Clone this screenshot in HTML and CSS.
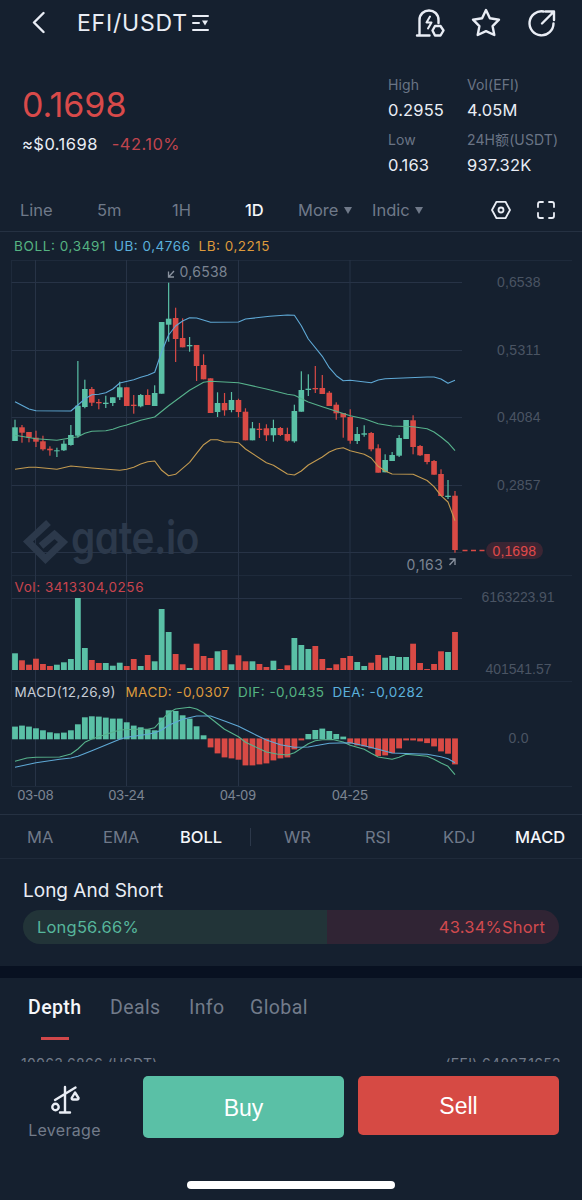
FILE: index.html
```html
<!DOCTYPE html>
<html lang="en">
<head>
  <meta charset="UTF-8">
  <title>EFI/USDT</title>
  <link rel="stylesheet" href="styles.css">
</head>
<body>
  <header class="topbar">
    <svg class="back" width="14" height="24" viewBox="0 0 14 24"><path d="M12.500 2 L3 11.500 L12.500 21" /></svg>
    <h1 class="pair">EFI/USDT</h1>
    <svg class="pair-menu" width="18" height="18" viewBox="0 0 18 18">
      <path d="M1 2H16M1 9H7M1 16H16" />
      <path class="solid" d="M10 6.500H16L13 11.500Z" />
    </svg>
    <div class="actions">
      <svg width="30" height="30" viewBox="0 0 30 30">
        <path d="M2 27.500H14.500M4.500 27V12C4.500 6 9 2.500 14 2.500S23.500 6 23.500 12V15" />
        <path class="thin" d="M15 8.500L11.500 14.500H16.500L13 20.500" />
        <path d="M20 18H25.500L28.500 22.500L25.500 27.500H20L17.500 22.500Z" />
      </svg>
      <svg width="30" height="30" viewBox="0 0 30 30">
        <path d="M15 2L18.900 10.300L28 11.700L21.600 18.200L23.300 27L15 23.200L6.700 27L8.400 18.200L2 11.700L11.100 10.300Z" />
      </svg>
      <svg width="30" height="30" viewBox="0 0 30 30">
        <path d="M16.500 3.500A12 12 0 1 0 26.500 15.500M15 15.500L26.500 4M18.500 3.500H27V12" />
      </svg>
    </div>
  </header>

  <section class="ticker">
    <div class="last">
      <div class="price">0.1698</div>
      <div class="sub"><span class="usd">≈$0.1698</span><span class="change">-42.10%</span></div>
    </div>
    <dl class="stats">
      <div><dt>High</dt><dd>0.2955</dd></div>
      <div><dt>Vol(EFI)</dt><dd>4.05M</dd></div>
      <div><dt>Low</dt><dd>0.163</dd></div>
      <div><dt class="turnover">24H额(USDT)</dt><dd>937.32K</dd></div>
    </dl>
  </section>

  <nav class="periods">
    <span class="p-line">Line</span>
    <span class="p-5m">5m</span>
    <span class="p-1h">1H</span>
    <span class="p-1d active">1D</span>
    <span class="p-more">More <i class="caret"></i></span>
    <span class="p-indic">Indic <i class="caret"></i></span>
    <svg class="settings" width="22" height="20" viewBox="0 0 22 20">
      <path d="M6.500 1.800H15.500L20 10L15.500 18.200H6.500L2 10Z" />
      <circle cx="11" cy="10" r="2.500" />
    </svg>
    <svg class="expand" width="18" height="18" viewBox="0 0 18 18">
      <path d="M1 6V3Q1 1 3 1H6M12 1H15Q17 1 17 3V6M17 12V15Q17 17 15 17H12M6 17H3Q1 17 1 15V12" />
    </svg>
  </nav>

  <svg class="chart" width="582" height="582" viewBox="0 232 582 582">
    <g class="grid faint">
      <path d="M11.500 260.500H572M11.500 575.500H572M11.500 681.500H572M11.500 786.500H572M11.500 260V786" />
    </g>
    <g class="grid">
      <path d="M11.500 282.500H462M11.500 350.500H462M11.500 417.500H462M11.500 485.500H462M11.500 552.500H462M11.500 598.500H462" />
      <path d="M35.500 260V786M126.500 260V786M238.500 260V786M350 260V786" />
    </g>

    <g class="watermark">
      <path class="mark" d="M48.500 522.500L28 541.500L45.500 559L63 542L54.500 534.500L41 546" />
      <text x="71" y="554" textLength="128" lengthAdjust="spacingAndGlyphs">gate.io</text>
    </g>

    <g id="candles"></g>
    <g id="volume"></g>
    <g id="macd"></g>
    <g id="lines" class="lines"></g>

    <g class="legend">
      <text class="mid" x="14" y="251" textLength="91.500">BOLL: 0,3491</text>
      <text class="ub" x="114" y="251" textLength="76">UB: 0,4766</text>
      <text class="lb" x="198.500" y="251" textLength="71">LB: 0,2215</text>
      <text class="vol" x="14.500" y="592" textLength="129">Vol: 3413304,0256</text>
      <text class="name" x="14.500" y="697" textLength="101">MACD(12,26,9)</text>
      <text class="lb" x="125.500" y="697" textLength="104">MACD: -0,0307</text>
      <text class="mid" x="238" y="697" textLength="86">DIF: -0,0435</text>
      <text class="ub" x="332.500" y="697" textLength="91">DEA: -0,0282</text>
    </g>

    <g class="mark-label">
      <text x="179.500" y="277" textLength="48">0,6538</text>
      <path d="M174 271L168.500 277M168.500 271.500V277H174" />
      <text x="406.500" y="569.500" textLength="36.500">0,163</text>
      <path d="M449.500 565L455 559M449.500 559H455V565" />
    </g>

    <g class="scale">
      <text x="497" y="287" textLength="43.500">0,6538</text>
      <text x="497" y="354.500" textLength="43.500">0,5311</text>
      <text x="497" y="422" textLength="43.500">0,4084</text>
      <text x="497" y="489.500" textLength="43.500">0,2857</text>
      <text x="481.500" y="602" textLength="73">6163223.91</text>
      <text x="485.500" y="673.500" textLength="66">401541.57</text>
      <text x="508.500" y="743" textLength="20">0.0</text>
    </g>

    <path class="last-line" d="M462.500 550.500H485" />
    <rect class="last-pill" x="486" y="542" width="57" height="17" rx="8.500" />
    <text class="last-text" x="492.500" y="556" textLength="43.500">0,1698</text>

    <g class="dates">
      <text x="17.500" y="800" textLength="36">03-08</text>
      <text x="108.500" y="800" textLength="36">03-24</text>
      <text x="220" y="800" textLength="36">04-09</text>
      <text x="332" y="800" textLength="36">04-25</text>
    </g>
  </svg>

  <nav class="indicators">
    <span class="i-ma">MA</span>
    <span class="i-ema">EMA</span>
    <span class="i-boll active">BOLL</span>
    <i class="split"></i>
    <span class="i-wr">WR</span>
    <span class="i-rsi">RSI</span>
    <span class="i-kdj">KDJ</span>
    <span class="i-macd active">MACD</span>
  </nav>

  <section class="ratio">
    <h2>Long And Short</h2>
    <div class="ratio-bar">
      <div class="long" style="width: 56.66%">Long56.66%</div>
      <div class="short">43.34%Short</div>
    </div>
  </section>

  <nav class="tabs">
    <span class="t-depth active">Depth</span>
    <span class="t-deals">Deals</span>
    <span class="t-info">Info</span>
    <span class="t-global">Global</span>
  </nav>

  <div class="depth-totals">
    <span class="bid-total">10963.6866 (USDT)</span>
    <span class="ask-total">(EFI) 64887.1652</span>
  </div>

  <footer class="trade">
    <div class="leverage">
      <svg width="30" height="30" viewBox="0 0 30 30">
        <path d="M15 2V27M10 27.500H20M5 15L25.500 2.500" />
        <circle cx="5.500" cy="22" r="3.200" />
        <path d="M25 7.500L21.700 13Q21.700 14.500 23 14.500H27Q28.500 14.500 28.500 13Z" />
      </svg>
      <span>Leverage</span>
    </div>
    <button type="button" class="buy">Buy</button>
    <button type="button" class="sell">Sell</button>
  </footer>
  <div class="home-bar"></div>

  <script src="chart.js"></script>
</body>
</html>
```

FILE: styles.css
```css
* {
  box-sizing: border-box;
}

body {
  margin: 0;
  width: 582px;
  height: 1200px;
  overflow: hidden;
  background-color: #15202f;
  color: #e9edf5;
  font-family: Inter, "Liberation Sans", sans-serif;
}

svg {
  display: block;
}

/* top bar */
.topbar {
  display: flex;
  align-items: center;
  height: 46px;
  padding: 0 25px 0 31px;
}

.topbar svg,
.leverage svg,
.settings,
.expand {
  fill: none;
  stroke: #e9edf5;
  stroke-width: 2.4;
  stroke-linecap: round;
  stroke-linejoin: round;
}

.pair {
  margin: 0 0 0 32px;
  width: 115px;
  font-size: 23px;
  font-weight: 400;
  letter-spacing: 0.8px;
  white-space: nowrap;
}

.topbar .pair-menu {
  stroke-width: 2;
}

.topbar .solid {
  fill: #e9edf5;
  stroke: none;
}

.topbar .thin {
  stroke-width: 2;
}

.actions {
  display: flex;
  gap: 26px;
  margin-left: auto;
}

/* ticker */
.ticker {
  display: flex;
  height: 144px;
}

.last {
  width: 388px;
  padding: 38px 0 0 22px;
}

.price {
  color: #d94a4a;
  font-size: 34px;
  line-height: 42px;
}

.sub {
  display: flex;
  gap: 14px;
  margin-top: 6px;
  font-size: 16.500px;
  line-height: 24px;
  letter-spacing: 0.45px;
}

.change {
  color: #c0454e;
}

.stats {
  display: grid;
  grid-template-columns: 79px 110px;
  grid-auto-rows: 55px;
  margin: 29px 0 0;
}

.stats dt {
  color: #6a7485;
  font-size: 14px;
  line-height: 20px;
  letter-spacing: 0.1px;
  white-space: nowrap;
}

.turnover {
  font-family: Inter, "Noto Sans CJK SC", sans-serif;
}

.stats dd {
  margin: 3px 0 0;
  font-size: 16.500px;
  line-height: 24px;
  letter-spacing: 0.15px;
}

/* chart periods */
.periods {
  display: flex;
  align-items: center;
  height: 42px;
  padding: 0 0 2px 20px;
  border-bottom: 1px solid #253142;
  color: #6f7989;
  font-size: 16.500px;
  white-space: nowrap;
}

.p-line { width: 77px; }
.p-5m { width: 75px; }
.p-1h { width: 73px; }
.p-1d { width: 53px; }
.p-more { width: 74px; }
.p-indic { width: 118px; }

.periods .active,
.indicators .active,
.tabs .active {
  color: #f4f6fa;
  font-weight: 500;
}

.caret {
  display: inline-block;
  margin-left: 1px;
  border: 4.500px solid transparent;
  border-top: 7px solid #6f7989;
  border-bottom: 0;
  vertical-align: 2px;
}

.settings,
.expand {
  stroke-width: 1.800;
}

.expand {
  margin-left: 25px;
}

/* chart */
.grid path {
  stroke: #273346;
  fill: none;
}

.faint path {
  stroke: #1e2a3b;
}

.watermark text {
  fill: #2c394b;
  font-size: 46px;
  font-weight: 600;
  letter-spacing: -0.5px;
  font-feature-settings: "cv11";
}

.watermark .mark {
  fill: none;
  stroke: #2c394b;
  stroke-width: 7;
}

.up {
  fill: #5ac0a6;
}

.down {
  fill: #d94a45;
}

.lines path {
  fill: none;
  stroke-width: 1.100;
  stroke-linejoin: round;
}

.line-ub { stroke: #5fa9d6; }
.line-mid { stroke: #57b28c; }
.line-lb { stroke: #c39a50; }

.legend text {
  font-size: 13.500px;
}

.legend .mid { fill: #55b382; }
.legend .ub { fill: #5bb0dc; }
.legend .lb { fill: #dd9a3c; }
.legend .vol { fill: #c8444e; }
.legend .name { fill: #c6ccd6; }

.mark-label text {
  fill: #7b8492;
  font-size: 14px;
}

.mark-label path {
  fill: none;
  stroke: #8a929f;
  stroke-width: 1.300;
}

.scale text {
  fill: #4a5463;
  font-family: "Liberation Sans", sans-serif;
  font-size: 14px;
}

.last-line {
  stroke: #d94a45;
  stroke-width: 1.300;
  stroke-dasharray: 5 3.500;
}

.last-pill {
  fill: #3b2533;
}

.last-text {
  fill: #e04a4a;
  font-family: "Liberation Sans", sans-serif;
  font-size: 14px;
}

.dates text {
  fill: #7b8492;
  font-family: "Liberation Sans", sans-serif;
  font-size: 14px;
}

/* indicator switcher */
.indicators {
  display: flex;
  align-items: center;
  height: 45px;
  padding-left: 27px;
  border-top: 1px solid #253142;
  border-bottom: 1px solid #1f2a3a;
  color: #6f7989;
  font-size: 16.500px;
}

.i-ma { width: 76px; }
.i-ema { width: 77px; }
.i-boll { width: 70px; }
.i-wr { width: 81px; }
.i-rsi { width: 78px; }
.i-kdj { width: 72px; }

.split {
  width: 1px;
  height: 18px;
  margin-right: 33px;
  background-color: #2c384a;
}

/* long / short */
.ratio {
  height: 119px;
  padding: 20px 23px 0;
  border-bottom: 12px solid #081121;
}

.ratio h2 {
  margin: 0;
  font-size: 19px;
  font-weight: 400;
  line-height: 24px;
}

.ratio-bar {
  display: flex;
  height: 34px;
  margin-top: 7px;
  border-radius: 17px;
  overflow: hidden;
  font-size: 16.500px;
  line-height: 34px;
  letter-spacing: 0.2px;
}

.long {
  padding-left: 14px;
  background-color: #223438;
  color: #56b69c;
}

.short {
  flex: 1;
  padding-right: 14px;
  background-color: #302434;
  color: #d04a4e;
  text-align: right;
}

/* order tabs */
.tabs {
  display: flex;
  height: 77px;
  padding: 17px 0 0 28px;
  color: #727b8a;
  font-family: Roboto, sans-serif;
  font-size: 19.500px;
  line-height: 25px;
  letter-spacing: 0.4px;
}

.t-depth { width: 82px; }
.t-deals { width: 79px; }
.t-info { width: 61px; }

.t-depth::after {
  content: "";
  display: block;
  width: 28px;
  height: 3px;
  margin: 17px 0 0 13px;
  background-color: #d0474a;
}

/* only the top of this row shows above the trade bar */
.depth-totals {
  display: flex;
  justify-content: space-between;
  height: 7px;
  padding: 0 21px;
  overflow: hidden;
  color: #727b8a;
  font-size: 14px;
  line-height: 18px;
  letter-spacing: 0.35px;
}

/* trade bar */
.trade {
  display: flex;
  align-items: flex-start;
  height: 121px;
  padding: 14px 0 0 23px;
}

.leverage {
  display: flex;
  flex-direction: column;
  align-items: center;
  width: 83px;
  margin: 9px 37px 0 0;
  color: #727b8a;
  font-size: 16px;
  line-height: 20px;
  letter-spacing: 0.3px;
}

.leverage span {
  margin-top: 5px;
}

.trade button {
  width: 201px;
  padding: 2px 0 0;
  border: none;
  border-radius: 5px;
  color: #fff;
  font-family: "Liberation Sans", sans-serif;
  font-size: 23px;
}

.buy {
  height: 62px;
  background-color: #5ac0a6;
}

.sell {
  height: 59px;
  margin-left: 14px;
  background-color: #d64a44;
}

.home-bar {
  width: 208px;
  height: 8px;
  margin: -2px auto 0;
  border-radius: 4px;
  background-color: #fff;
}
```

FILE: chart.js
```js
const SVG = "http://www.w3.org/2000/svg";
const STEP = 6.984;
const X0 = 15;

// colour, high, body top, body bottom, low
const candles = [
  ["up", 419.7, 427.3, 441, 441], ["down", 425, 427.3, 432.7, 442.7],
  ["down", 432, 432, 437.7, 442.3], ["down", 430.7, 437.7, 441.7, 447],
  ["down", 435.7, 441.3, 449.3, 450.7], ["down", 446.3, 448.7, 450.3, 455.7],
  ["up", 447.7, 450.3, 451.3, 457], ["up", 440.3, 443.7, 450.3, 451],
  ["up", 425, 435, 445, 445.7], ["up", 361, 405.7, 435.7, 437.7],
  ["up", 379.7, 389, 407, 408.3], ["down", 387, 389, 402.7, 406],
  ["down", 399, 402, 403.3, 409.3], ["up", 395.7, 402.7, 404, 408],
  ["up", 397.3, 397.3, 403, 406], ["up", 381.7, 387.3, 397.3, 400],
  ["down", 387.3, 387.3, 406, 406], ["down", 395, 404.7, 406, 413.7],
  ["up", 394, 395, 406.3, 407.3], ["down", 389.3, 395, 405, 405],
  ["up", 385.3, 393, 406, 406], ["up", 322, 322, 393.7, 393.7],
  ["up", 282.7, 318.7, 324.7, 341.7], ["down", 307.7, 318, 339, 362],
  ["down", 318.3, 338, 347.3, 347.3], ["up", 337, 345, 346.3, 351.7],
  ["down", 345, 345, 366, 381], ["down", 354.3, 365, 379.3, 379.3],
  ["down", 378.3, 378.3, 413, 413], ["up", 392.3, 403, 412, 417],
  ["down", 393, 403, 410.3, 415.7], ["up", 392, 400, 410, 412.3],
  ["down", 398.7, 400, 412, 417.3], ["down", 408.3, 411.7, 440.3, 440.3],
  ["up", 422, 428.3, 440.3, 440.3], ["down", 423, 428.7, 430, 438],
  ["down", 424.3, 428.3, 435.3, 441], ["up", 419.7, 428, 435.3, 441.7],
  ["down", 427, 428, 435, 436], ["down", 427.7, 434, 440.7, 441.7],
  ["up", 404.7, 411, 441.3, 442.7], ["up", 371.3, 390, 411.7, 411.7],
  ["up", 374.3, 388.7, 390, 396], ["down", 366, 388, 389.3, 393],
  ["down", 375, 388, 394, 394], ["down", 391, 392.7, 406, 406],
  ["down", 402.3, 404.7, 413.3, 419.7], ["down", 413, 413, 417.3, 437.7],
  ["down", 409.3, 417, 440.7, 443.7], ["up", 427, 434, 441, 444],
  ["up", 425.3, 433.3, 434.7, 436.7], ["down", 432, 433, 449.3, 451.3],
  ["down", 444.3, 448.3, 472.7, 472.7], ["up", 454.3, 460, 472.3, 472.3],
  ["up", 452, 455, 461, 461], ["up", 435, 438, 455.7, 457],
  ["up", 420, 420, 439, 439], ["down", 415.3, 420.3, 447, 454.3],
  ["down", 445, 446, 455.3, 456], ["down", 454, 454, 462, 464.3],
  ["down", 460, 461, 474.7, 474.7], ["down", 469.3, 474, 496, 496],
  ["up", 480, 495.7, 497, 499], ["down", 491, 495.7, 550, 552.7]
];

const volume = [
  16.7, 9.7, 5.3, 11.3, 6, 4, 5.3, 7.7, 11, 72, 22, 10, 7, 7, 4.3, 7.3,
  4, 11, 4, 15, 8.7, 61, 38, 16, 5.7, 2, 26.3, 14, 12, 18.7, 20, 5.7,
  14.7, 8.7, 8.7, 6, 3, 9.3, 1, 4.7, 32, 25, 21, 24, 11, 2, 5.7, 12,
  14, 8, 4, 7.3, 15, 12.3, 14, 13, 13, 26.3, 7, 1, 6, 18.7, 18, 38
];

const macd = [
  12.7, 13.7, 12.7, 11, 9, 7, 6, 6.7, 9, 15, 22, 23, 22.7, 21.7, 20.7, 20.7,
  17, 13.7, 12, 10, 9, 21.7, 29, 28.3, 24, 20.7, 13, 4, -9, -15, -19, -20,
  -21.3, -27, -27, -26, -25, -22, -20, -19, -11, -2, 5.3, 9.3, 10.7, 8.3, 5.3, 2.7,
  -5, -7, -8, -10, -17.7, -17, -14.7, -10, -2, -2, -3, -4.7, -8, -13, -15.3, -26
];

// candle index, y
const lines = {
  ub: [[0, 401.7], [2, 409], [3, 410.7], [8, 411], [9, 405], [10, 399], [11, 394.7], [12, 394.3], [13, 392.7],
    [14, 389], [15, 383], [17, 379.7], [18, 377.3], [19, 375.3], [20, 372.3], [21, 351.7], [22, 335], [23, 326],
    [24, 321], [25, 317.7], [26, 318], [28, 322.3], [32, 322], [33, 319], [36.5, 316.3], [39, 315], [40, 315.3],
    [41, 325.7], [42, 339], [44, 356.3], [45, 367.7], [46, 375.7], [47, 380.7], [48, 380.3], [51, 382.7],
    [52, 380], [53, 378.7], [59, 377], [60, 377], [61, 379], [62, 383.3], [63, 380.3]],
  mid: [[0, 435.3], [3, 438.7], [6, 440.3], [9, 436.7], [10, 433.3], [11, 431.3], [13, 430.7], [14, 429.3],
    [15, 426.7], [16, 425], [18, 420.3], [20, 417], [22, 405.7], [25, 390.3], [27, 382.3], [28, 381.3],
    [30, 382], [32, 382.7], [36, 389], [39, 394.3], [40, 395.3], [42, 402], [44, 406.7], [46, 411.3],
    [48, 415.7], [50, 418.7], [52, 423.7], [54, 426], [57, 426.7], [59, 428.7], [60, 432], [61, 437],
    [62, 442.7], [63, 450.7]],
  lb: [[0, 469.3], [2, 467.3], [3, 467.3], [6, 469.3], [8, 466], [11, 468], [15, 470.3], [16, 469.3],
    [17, 467.3], [18, 464], [19, 461.7], [20, 461], [21, 470.3], [22, 475.7], [23, 474.3], [25, 462.3],
    [26, 453.3], [27, 444.7], [28, 439.7], [29, 439.7], [30, 442], [31, 442], [32, 442.7], [33, 449],
    [36, 462.7], [37, 465.3], [39, 474], [40, 475], [41, 471], [42, 465], [44, 457], [45, 452], [46, 449],
    [47, 447.7], [48, 450.7], [50, 454.3], [51, 458], [52, 466.3], [53, 471], [54, 474], [57, 474.3],
    [59, 480.5], [60, 486.7], [61, 495.7], [62, 502], [63, 520.7]],
  dif: [[0, 761.3], [1.7, 758], [3, 757.3], [6.4, 757], [8, 754], [9, 749], [10, 742.3], [11, 739],
    [13.5, 733.3], [15, 730], [17, 729.3], [19, 729.3], [20, 727.7], [21, 720], [22, 712.7], [23, 709],
    [25, 707.3], [26, 709], [27, 712.7], [28, 718.3], [30, 729.3], [32, 736.7], [33, 742.3], [36, 752],
    [37.5, 754], [39, 755], [40, 752.7], [41, 748.3], [42, 743.7], [43, 740.7], [44, 739.7], [45.5, 739.5],
    [47, 742], [48, 745.3], [50, 749.3], [51, 753.3], [52, 757], [54, 759.3], [55, 757.3], [56, 754.3],
    [59, 756.3], [60, 759.3], [61, 763], [62, 766.3], [63, 774.7]],
  dea: [[0, 767.3], [3, 762.7], [6.4, 759.3], [8, 758], [9, 756.3], [11, 750.7], [15, 739.3], [16, 737.3],
    [19, 734.3], [20, 732.7], [21, 730], [22, 725.3], [24, 719.3], [26, 716], [28, 716], [30, 721],
    [32, 726.3], [34, 733.3], [36, 740], [38, 744.7], [40, 747.3], [42, 747], [45, 743.3], [48, 742.7],
    [50, 745.7], [52, 749.3], [54, 753], [59, 754.3], [61, 756.7], [62, 758.7], [63, 762.7]]
};

const colors = { ub: "ub", mid: "mid", lb: "lb", dif: "mid", dea: "ub" };

function x(i) {
  return X0 + i * STEP;
}

function bar(parent, cls, left, top, width, height) {
  const el = document.createElementNS(SVG, "rect");
  el.setAttribute("class", cls);
  el.setAttribute("x", left.toFixed(2));
  el.setAttribute("y", top.toFixed(2));
  el.setAttribute("width", width);
  el.setAttribute("height", height.toFixed(2));
  document.getElementById(parent).appendChild(el);
}

candles.forEach(([cls, high, top, bottom, low], i) => {
  bar("candles", cls, x(i) - 0.6, high, 1.2, low - high);
  bar("candles", cls, x(i) - 2.8, top, 5.6, bottom - top);
  bar("volume", cls, x(i) - 2.9, 670 - volume[i], 5.8, volume[i]);
});

macd.forEach((v, i) => {
  if (v > 0) {
    bar("macd", "up", x(i) - 2.9, 739.3 - v, 5.8, v);
  } else {
    bar("macd", "down", x(i) - 2.9, 738.4, 5.8, -v);
  }
});

Object.keys(lines).forEach(key => {
  const el = document.createElementNS(SVG, "path");
  el.setAttribute("class", "line-" + colors[key]);
  el.setAttribute("d", "M" + lines[key].map(([i, y]) => x(i).toFixed(1) + " " + y).join("L"));
  document.getElementById("lines").appendChild(el);
});
```
